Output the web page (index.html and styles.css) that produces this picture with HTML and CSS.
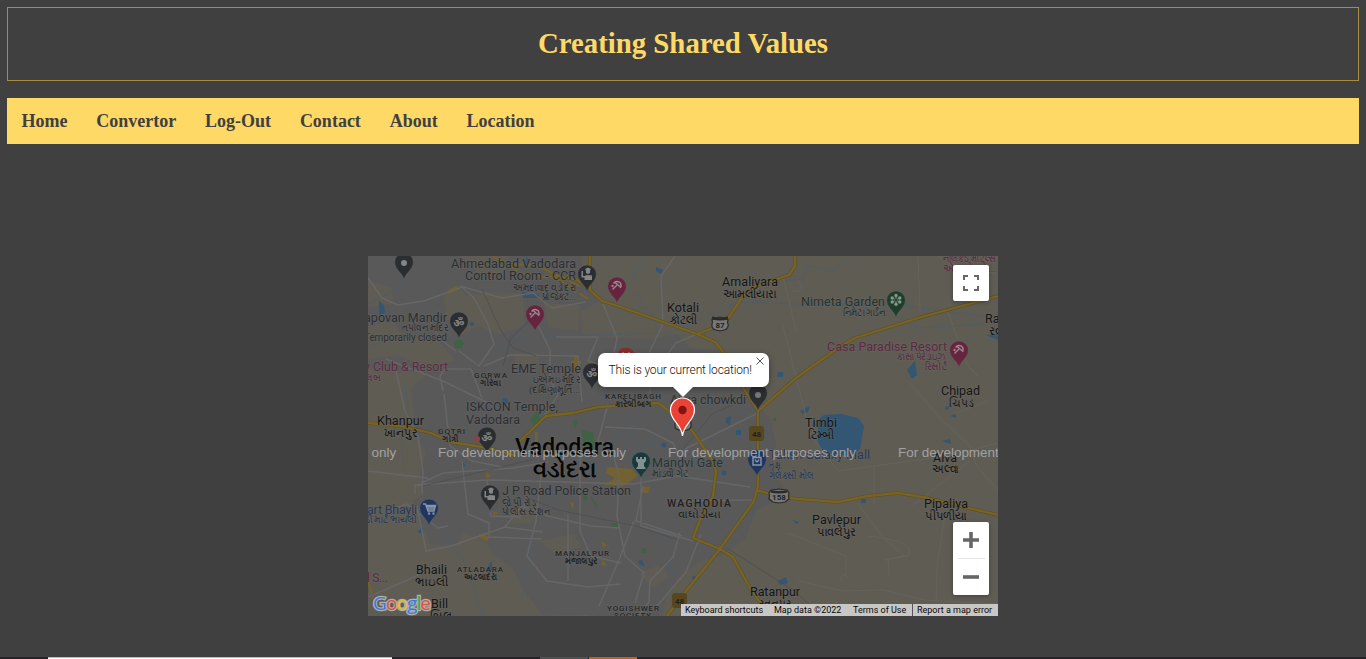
FILE: index.html
```html
<!DOCTYPE html>
<html lang="en">
<head>
<meta charset="utf-8">
<title>Creating Shared Values</title>
<link rel="stylesheet" href="styles.css">
</head>
<body>
<header class="banner"><h1>Creating Shared Values</h1></header>
<nav class="nav"><a>Home</a><a>Convertor</a><a>Log-Out</a><a>Contact</a><a>About</a><a>Location</a></nav>
<main class="map">
<svg class="tiles" width="630" height="360" viewBox="0 0 630 360">
<defs>
<path id="drop" d="M0 0C-1-7-9.300-10-9.300-18A9.300 9 0 0 1 9.300-18C9.300-10 1-7 0 0Z"/>
<g id="umbrella" fill="none" stroke="#9b8a90" stroke-width="1.3"><path d="M-3.500-20.500Q-1-24 3-21.500M3-21.500Q5-19 3.500-16M-2.500-22L4-16.500M0-19L-4.500-14.500"/><circle cx="-4.500" cy="-18" r=".5"/></g>
<path id="shield" d="M-7-7L-4-6 0-7 4-6 7-7 8-4Q7-2 8 0Q9 5 4 6L0 7-4 6Q-9 5-8 0Q-7-2-8-4Z"/>
</defs>
<rect width="630" height="360" fill="#5f5c54"/>
<path class="city" d="M0 0H213L216 28 230 46 213 55 215 78 245 82 285 83 310 78 322 92 350 94 373 123 388 145 403 165 408 190 403 215 415 231 405 247 388 254 378 282 365 292 350 300 330 306 312 320 300 335 293 360H175L155 333 145 312 125 298 118 285 96 276 88 290 62 288 52 263 45 245 56 238 52 220 58 196 47 178 40 159 43 132 60 118 0 112Z"/>
<g class="land"><path d="M75 38L90 28 98 40 125 35 155 38 157 69 132 79 110 70 95 79 78 63ZM0 24L24 32 26 48 0 51ZM92 0H140L137 18 112 20 103 9ZM0 70L25 65 37 82 68 82 88 105 58 112 31 100 0 103ZM0 115L42 119 45 148 48 170 50 220 38 262 0 282ZM145 97H171V106L148 110ZM176 47L212 49 210 75 180 71ZM140 255L170 249 169 267 145 268ZM171 285L205 278 214 291 188 299ZM270 318L290 309 301 320 286 332Z"/></g>
<g class="water"><path d="M159 0L161 8 156 12ZM154 36L171 39 170 42 155 42ZM11 45L16 49 17 57 11 59ZM288 11L295 14 293 18 288 15ZM450 164L456 159 473 158 490 162 496 170 492 193 482 200 455 196 450 186ZM539 114L547 105 549 119 544 123ZM432 155L442 150 440 156 434 158ZM582 160L588 157 588 162ZM574 185L582 183 583 188ZM618 79L630 78V84ZM410 116H415V121H409ZM358 162L363 160 362 170 358 166ZM368 174H373V179H368ZM120 310L124 305 124 315 120 318ZM410 325L418 321 420 327 412 329ZM270 305L274 304 277 310 272 309ZM250 218H260V223H250ZM49 276L55 271 55 278ZM493 243H498V247H493ZM425 264L431 266 428 268ZM345 102H350V106H345Z"/><circle cx="95" cy="209" r="2"/><circle cx="296" cy="189" r="2.5"/><circle cx="356" cy="217" r="2.5"/><circle cx="137" cy="145" r="3"/><circle cx="104" cy="68" r="2"/><circle cx="579" cy="152" r="2"/><circle cx="326" cy="322" r="2"/><circle cx="395" cy="208" r="2"/></g>
<g class="park"><path d="M86 87L91 82 96 87 93 92 87 92ZM162 163L170 155 172 164 165 169ZM214 174L225 177 226 195 216 192ZM204 165L209 163 208 173ZM243 267H252V271H243ZM222 239L230 250 228 253ZM213 233L220 242 216 245ZM274 292H278V297H274ZM404 164L408 161 408 165Z"/></g>
<g class="blocks"><path d="M206 99H209V115H206ZM203 105H213V108H203ZM239 211L264 213 270 220 255 230 236 229 247 222 238 217ZM272 231L282 230 280 237H275ZM111 278L121 280 120 285 112 282ZM124 255L132 257 126 259ZM167 176H170V191H167ZM202 246L206 247 205 254ZM177 149L184 151 180 158ZM118 216L123 220 118 223ZM233 285L239 289 235 292ZM234 303L239 310 234 309ZM192 225L198 226 198 228ZM80 34L89 30 90 34 81 38Z"/></g>
<g class="stream"><path d="M0 48L40 27M0 91L22 83 50 79 80 84M100 111L120 97 157 82 220 79 300 77 345 58 370 46 430 48 530 49 615 60M275 8L263 20 269 24 261 33 274 43 270 50 282 55 290 76M415 25L435 23 440 10 465 15 480 2M475 49L525 56 550 72 615 68M254 165L268 172 258 180 270 187 287 180 304 158M243 180L250 178 257 187M310 159L283 190 271 193 260 201M297 262L291 267 298 277 295 289 304 292 302 315 310 321 301 332 304 344M158 242L167 275 160 287 166 300 157 317 154 341M77 270L82 290 94 302 108 340 115 360M372 255L368 270 358 285 352 293M36 125L40 150 33 182 36 215M191 249L180 240 176 226M384 246L389 254 384 262"/></g>
<g class="minor"><path d="M0 22L14 42 30 49 56 45 94 31 106 42 120 68 126 88 111 110 91 95M92 30L134 42 165 37 184 52 218 46M168 65L182 94 182 124 190 139 176 160M88 95L72 83 63 67M116 110L142 99 210 100 214 146M188 81H230L220 105 240 111 284 113M307 0L293 20 295 68 282 95 282 150M235 48L249 82 246 97M288 113L308 87 329 78M75 135L72 120 77 113 103 113 114 142M28 115L37 155 50 180 55 216 54 237M53 227L75 217 145 212 180 206M47 238V229L120 224 162 225 265 228 310 220 382 231M76 138L82 190 104 205 135 211M94 205L100 258 121 267 121 281 174 283M119 224L123 260 152 261 160 240M49 250L58 295 83 290 137 271 154 250 180 260 223 270 252 272M174 211L168 265 159 300 179 325 220 331 252 328M175 276L137 271M212 180V225L212 275 223 300 253 307M251 222L249 260 257 300 276 317 267 347M266 265L251 304 231 350M273 210L273 270 325 285M305 245L385 244M240 148L230 185 243 190 251 220M312 276L305 301 282 325 281 346 270 360M333 278L318 316 289 350M237 171L277 173 305 187 320 220M317 193L390 157M0 215L60 222M18 103L75 125 120 147M200 258V325M275 230L268 265 314 280M0 341L35 326 65 312M20 255L39 248 70 272 80 270"/></g>
<g class="rail"><path d="M114 33L132 73 145 92 168 100M160 242L190 254 268 270 310 284M360 293L425 334 455 360M315 193L345 157 365 149M135 110L143 82 166 60M55 230L100 219 167 203"/></g>
<g class="trace"><path d="M415 70L443 180 470 215 506 210 506 249M506 210L580 200 630 187M415 20L428 75M430 25Q440 37 425 35M552 55L550 0M580 56L600 110 610 120M540 125L572 162 602 190 608 209 630 234M602 205L545 249M577 259L569 310 568 348M430 325L475 335 515 334 555 344 630 348M490 248L514 280 536 300 520 303 521 320M420 277L478 300 478 320M500 280Q550 285 540 300L517 304M472 325L475 318 480 322M586 158L619 145M570 0L590 10 630 18"/></g>
<g class="casing"><path id="roads" d="M222 0V34L234 45 250 50 329 78 347 86 356 97 376 133 390 155 390 230 386 245 352 293 310 345 299 360M0 167L32 170 63 177 83 186 120 192 148 200M150 187L178 160 205 157 230 151 248 150 290 147 305 158 322 172 343 202 348 215 345 240 333 262 325 282 352 293 365 301 382 332 397 354M329 78L345 72 357 67 375 40 388 30 421 19 427 10 427 0M390 155L428 122 470 92 487 82 550 62 630 40M388 234L410 240 430 243 470 246 500 240 530 237 560 242 600 252 630 259M218 30L208 23 182 20"/></g>
<use class="main-road" href="#roads"/>
<path class="dash" d="M125 0L155 18 190 23 220 43M142 8L168 9 211 30M0 325L8 350"/>

<g class="pin gray"><use href="#drop" x="36" y="24"/><use href="#drop" x="219" y="36"/><use href="#drop" x="91" y="83"/><use href="#drop" x="224" y="134"/><use href="#drop" x="119" y="198"/><use href="#drop" x="122" y="256"/><use href="#drop" x="390" y="155"/></g>
<g class="pin rose"><use href="#drop" x="249" y="48"/><use href="#drop" x="167" y="76"/><use href="#drop" x="591" y="112"/></g>
<g class="pin blue"><use href="#drop" x="61" y="270"/><use href="#drop" x="389" y="221"/></g>
<use class="pin garden" href="#drop" x="528" y="62"/><use class="pin gate" href="#drop" x="273" y="223"/><use class="pin red" href="#drop" x="258" y="118"/>
<path d="M255 96V102M261 96V102M255 99H261" fill="none" stroke="#a88380" stroke-width="1.5"/>
<circle cx="36" cy="7" r="3" fill="#858585"/><circle cx="390" cy="139" r="3" fill="#777"/>
<use href="#umbrella" x="249" y="48"/><use href="#umbrella" x="167" y="76"/><use href="#umbrella" x="591" y="112"/>
<g class="om"><text x="91" y="71">ॐ</text><text x="224" y="122">ॐ</text><text x="119" y="186">ॐ</text></g>
<g fill="#858585"><path id="officer" d="M217 13L220 11.500 223 13 222 14.500V17L220 18 218 17V14.500ZM216.500 24V20L219 19 224 19.500V24ZM213.500 15H215V20H217V21.500H213.500Z"/><use href="#officer" x="-97" y="220"/></g>
<g fill="none" stroke="#8995aa" stroke-width="1.4"><path d="M55 248H57.500L60 255H66L67.500 249.500H58.500M59 251H67M59.500 253H66.500"/><circle cx="61" cy="257.500" r=".5"/><circle cx="65.500" cy="257.500" r=".5"/><path d="M385 201.500H393V209H385ZM387 203.500Q389 208 391 203.500"/></g>
<path d="M268 201V205L270 207V210L268 213H278L276 210V207L278 205V201H276V203H274V201H272V203H270V201Z" fill="#809392"/>
<g fill="#829887"><circle cx="528" cy="39.500" r="1.700"/><circle cx="531.800" cy="42" r="1.700"/><circle cx="531.800" cy="46" r="1.700"/><circle cx="528" cy="48.300" r="1.700"/><circle cx="524.200" cy="46" r="1.700"/><circle cx="524.200" cy="42" r="1.700"/></g><path d="M528 40V48M524.500 42L531.500 46M531.500 42L524.500 46" stroke="#829887"/><circle cx="528" cy="44" r="1.300" fill="#203d2b"/>
<circle cx="109" cy="183" r="3" fill="#8b4441"/>

<g class="route"><use href="#shield" x="352" y="68"/><path class="band" d="M344.500 62.500Q352 64 359.500 62.500"/><text x="352" y="72">87</text><use href="#shield" x="315" y="168"/><path d="M403 234L411 233 419 234 421 237Q420 240 421 243L417 246 411 247 405 246 401 243Q402 240 401 237Z"/><path class="band" d="M403 235.500Q411 237 419 235.500"/><text x="411" y="244">158</text></g>
<g class="highway"><rect x="381" y="170" width="15" height="15" rx="3"/><text x="388.500" y="181">48</text><rect x="304" y="337" width="15" height="15" rx="3"/><text x="311.500" y="348">48</text></g>

<g class="poi">
<text x="83" y="12" textLength="125">Ahmedabad Vadodara</text><text x="97" y="24" textLength="111">Control Room - CCR</text>
<text class="gu" x="145" y="35" textLength="63" lengthAdjust="spacingAndGlyphs">અમદાવાદ વડોદરા</text><text class="gu" x="174" y="44" textLength="34" lengthAdjust="spacingAndGlyphs">પ્રોજેક્ટ...</text>
<text x="-4" y="66" textLength="83">apovan Mandir</text><text class="gu" x="34" y="75" textLength="46" lengthAdjust="spacingAndGlyphs">તપોવન મંદિર</text><text class="small" x="-4" y="85" textLength="83">Temporarily closed</text>
<text x="143" y="117" textLength="70">EME Temple</text><text class="gu" x="165" y="127" textLength="47" lengthAdjust="spacingAndGlyphs">ઇએમઇ મંદિર</text><text class="gu" x="161" y="137" textLength="51" lengthAdjust="spacingAndGlyphs">(દક્ષિણામૂર્તિ...</text>
<text x="98" y="155" textLength="92">ISKCON Temple,</text><text x="98" y="167.500" textLength="54">Vadodara</text>
<text x="302" y="148" textLength="76">Ajwa chowkdi</text>
<text x="134" y="239" textLength="129">J P Road Police Station</text><text class="gu" x="134" y="250" textLength="34" lengthAdjust="spacingAndGlyphs">જે.પી રોડ</text><text class="gu" x="134" y="259" textLength="48" lengthAdjust="spacingAndGlyphs">પોલીસ સ્ટેશન</text>
</g>
<g class="poi green"><text x="433" y="50" textLength="84">Nimeta Garden</text><text class="gu" x="475" y="60" textLength="42" lengthAdjust="spacingAndGlyphs">નિમેટા ગાર્ડન</text></g>
<g class="poi teal"><text x="284" y="211" textLength="71">Mandvi Gate</text><text class="gu" x="284" y="221" textLength="37" lengthAdjust="spacingAndGlyphs">માંડવી ગેટ</text></g>
<g class="poi plum"><text x="5" y="115" textLength="75">Club &amp; Resort</text><text x="-4" y="115">y</text><text class="gu" x="-3" y="125">લબ</text><text x="459" y="95" textLength="120">Casa Paradise Resort</text><text class="gu" x="529" y="104" textLength="49" lengthAdjust="spacingAndGlyphs">કાસા પેરેડાઇઝ</text><text class="gu" x="557" y="114" textLength="22" lengthAdjust="spacingAndGlyphs">રિસોર્ટ</text><text class="gu" x="575" y="6" textLength="53" lengthAdjust="spacingAndGlyphs">નીલકંઠ મોટેલ્સ</text><text class="gu" x="575" y="16" textLength="53" lengthAdjust="spacingAndGlyphs">એન્ડ રેસ્ટો...</text><text x="-1" y="325.500" textLength="21">l S...</text></g>
<g class="poi navy"><text x="-1" y="258" textLength="50">art Bhayli</text><text class="gu" x="-3" y="267" textLength="52" lengthAdjust="spacingAndGlyphs">ડી માર્ટ ભાયલી</text><text x="401" y="203" textLength="101">Taksh Galaxy Mall</text><text class="gu" x="401" y="213" textLength="11" lengthAdjust="spacingAndGlyphs">તક્ષ</text><text class="gu" x="401" y="223" textLength="45" lengthAdjust="spacingAndGlyphs">ગેલેક્સી મોલ</text></g>
<g class="town">
<text x="354" y="30" textLength="56">Amaliyara</text><text class="gu" x="355" y="42" textLength="54" lengthAdjust="spacingAndGlyphs">આમલીયારા</text>
<text x="299" y="56" textLength="32">Kotali</text><text class="gu" x="302" y="68" textLength="27" lengthAdjust="spacingAndGlyphs">કોટલી</text>
<text x="617" y="67">Ra</text><text class="gu" x="621" y="79">રવ</text>
<text x="573" y="139" textLength="39">Chipad</text><text class="gu" x="581" y="151" textLength="25" lengthAdjust="spacingAndGlyphs">ચિપડ</text>
<text x="9" y="169" textLength="47">Khanpur</text><text class="gu" x="16" y="181" textLength="33" lengthAdjust="spacingAndGlyphs">ખાનપુર</text>
<text x="437" y="171" textLength="32">Timbi</text><text class="gu" x="440" y="183" textLength="26" lengthAdjust="spacingAndGlyphs">ટિમ્બી</text>
<text x="565" y="206" textLength="24">Alva</text><text class="gu" x="564" y="217" textLength="27" lengthAdjust="spacingAndGlyphs">અલ્વા</text>
<text x="556" y="252" textLength="44">Pipaliya</text><text class="gu" x="557" y="264" textLength="42" lengthAdjust="spacingAndGlyphs">પીપળીયા</text>
<text x="444" y="268" textLength="49">Pavlepur</text><text class="gu" x="449" y="280" textLength="39" lengthAdjust="spacingAndGlyphs">પાવલેપુર</text>
<text x="48" y="318" textLength="31">Bhaili</text><text class="gu" x="47" y="330" textLength="33" lengthAdjust="spacingAndGlyphs">ભાઇલી</text>
<text x="63" y="352" textLength="17">Bill</text><text class="gu" x="62" y="364">બિલ</text>
<text x="382" y="340" textLength="50">Ratanpur</text><text class="gu" x="391" y="352" textLength="32" lengthAdjust="spacingAndGlyphs">રતનપુર</text>
</g>
<g class="area">
<text x="106" y="122" textLength="33">GORWA</text><text class="gu" x="112" y="130" textLength="21" lengthAdjust="spacingAndGlyphs">ગોરવા</text>
<text x="237" y="143" textLength="56">KARELIBAGH</text><text class="gu" x="247" y="151" textLength="37" lengthAdjust="spacingAndGlyphs">કારેલીબાગ</text>
<text x="70" y="178" textLength="27">GOTRI</text><text class="gu" x="74" y="186" textLength="17" lengthAdjust="spacingAndGlyphs">ગોત્રી</text>
<text x="187" y="299.500" textLength="54">MANJALPUR</text><text class="gu" x="197" y="308" textLength="33" lengthAdjust="spacingAndGlyphs">મંજાલપુર</text>
<text x="89" y="316" textLength="46">ATLADARA</text><text class="gu" x="96" y="324" textLength="33" lengthAdjust="spacingAndGlyphs">અટલાદરા</text>
<text x="239" y="354.500" textLength="52">YOGISHWER</text><text x="246" y="362" textLength="37">SOCIETY</text><text x="179" y="365">MAKARPURA</text>
</g>
<text class="district" x="299" y="251" textLength="64">WAGHODIA</text><text class="district" x="310" y="262" textLength="43" lengthAdjust="spacingAndGlyphs">વાઘોડીયા</text>
<text class="metropolis" x="147" y="199" textLength="99" lengthAdjust="spacingAndGlyphs">Vadodara</text><text class="metropolis gujarati" x="165" y="221" textLength="64" lengthAdjust="spacingAndGlyphs">વડોદરા</text>
<g class="watermark"><text x="3.500" y="201">only</text><text x="70" y="201" textLength="188">For development purposes only</text><text x="300" y="201" textLength="188">For development purposes only</text><text x="530" y="201" textLength="188">For development purposes only</text></g>
<g class="logo"><text x="5" y="354" textLength="58"><tspan fill="#3979e2">G</tspan><tspan fill="#dc5044">o</tspan><tspan fill="#e5b629">o</tspan><tspan fill="#3979e2">g</tspan><tspan fill="#31a354">l</tspan><tspan fill="#dc5044">e</tspan></text></g>
<path d="M314.500 180C313.500 168 302.500 165 302.500 154A12 12 0 0 1 326.500 154C326.500 165 315.500 168 314.500 180Z" fill="#ea4335" stroke="#fff" stroke-width="1.2"/><circle cx="314.500" cy="154" r="4.200" fill="#811411"/>
</svg>
<div class="bubble">This is your current location!<svg class="close" width="8" height="8" viewBox="0 0 8 8"><path d="M.5.5L7.500 7.500M7.500.5L.5 7.500"/></svg></div>
<div class="control fullscreen"><svg width="18" height="18" viewBox="0 0 18 18"><path d="M2 6V2H6M12 2H16V6M16 12V16H12M6 16H2V12"/></svg></div>
<div class="control zoom"><svg width="18" height="18" viewBox="0 0 18 18"><path class="bold" d="M9 1V17M1 9H17"/></svg><span class="rule"></span><svg width="18" height="18" viewBox="0 0 18 18"><path class="bold" d="M1 9H17"/></svg></div>
<footer class="credits"><span>Keyboard shortcuts</span><span>Map data ©2022</span><span>Terms of Use</span><span>Report a map error</span></footer>
</main>
<div class="taskbar"><i class="search"></i><i class="app"></i><i class="active"></i></div>
</body>
</html>
```
FILE: styles.css
```css
* { box-sizing: border-box; }
body { margin: 0; padding: 7px 7px 0; height: 659px; display: flex; flex-direction: column; overflow: hidden; background: #404040; font-family: "Liberation Serif", serif; }
.banner { height: 74px; flex: none; border: 1px solid #a78d3e; display: flex; align-items: center; justify-content: center; padding-bottom: 1px; }
h1 { margin: 0; font-size: 28.8px; line-height: 33px; color: #ffd966; }
.nav { height: 46px; flex: none; margin-top: 17px; padding: 13px 14.5px 0; display: flex; gap: 28.8px; background: #ffd966; color: #404040; font-size: 18px; font-weight: bold; line-height: 21px; }
.map { position: relative; width: 630px; height: 360px; flex: none; margin: 112px auto 0; overflow: hidden; font-family: Roboto, sans-serif; }
.tiles { display: block; font-family: Roboto, "Noto Sans", sans-serif; }
.city { fill: #595959; }
.land { fill: #5f5c54; }
.water { fill: #335672; }
.park { fill: #3d6343; }
.blocks { fill: #736230; }
.stream, .minor, .rail, .trace, .casing, .main-road, .dash { fill: none; stroke-linejoin: round; }
.stream { stroke: #4b5e6a; stroke-width: .8; }
.minor { stroke: #666; stroke-width: 1.5; }
.rail { stroke: #4e4e4e; stroke-width: .8; }
.trace { stroke: #65635d; stroke-width: 1; }
.casing { stroke: #5c5028; stroke-width: 3.4; }
.main-road { stroke: #786323; stroke-width: 2.3; }
.dash { stroke: #786323; stroke-width: 1.8; stroke-dasharray: 13 3; }
.pin { stroke: #626262; stroke-width: .5; }
.gray { fill: #2b2e31; }
.rose { fill: #66243e; }
.blue { fill: #20365f; }
.garden { fill: #203d2b; }
.gate { fill: #1a393b; }
.red { fill: #852f2b; }
.om text { font-size: 11px; font-weight: bold; fill: #858585; text-anchor: middle; }
.tiles text { white-space: pre; }
.poi text, .town text, .area text, .district, .metropolis { paint-order: stroke; stroke: rgba(108, 108, 108, .35); stroke-width: 1.6px; stroke-linejoin: round; }
.poi { font-size: 12.5px; fill: #2c2e31; }
.poi .gu { font-size: 9.5px; }
.poi .small { font-size: 10px; }
.green { fill: #27332c; }
.teal { fill: #233436; }
.plum { fill: #5d2b41; }
.navy { fill: #26385a; }
.town { font-size: 12.5px; fill: #151515; }
.town .gu { font-size: 12px; }
.area { font-size: 8px; font-weight: 500; fill: #262626; }
.area .gu { font-size: 8.5px; font-weight: bold; }
.district { font-size: 10.5px; font-weight: 500; fill: #202020; }
.metropolis { font-size: 24px; font-weight: 500; fill: #080808; }
.gujarati { font-size: 23px; font-weight: bold; }
.watermark { font: 13.5px "Liberation Sans", sans-serif; fill: #a1a1a1; }
.route { fill: #777; stroke: #2b2b2b; stroke-width: 1.2; }
.route .band { fill: none; stroke-width: 2.4; }
.route text, .highway text { stroke: none; fill: #222; font-size: 8px; font-weight: bold; text-anchor: middle; }
.highway { fill: #57471e; }
.logo { font: 500 19px "Open Sans", sans-serif; }
.logo text { paint-order: stroke; stroke: #b0b0ad; stroke-width: 2.5px; }
.logo tspan { stroke: inherit; }
.bubble { position: absolute; left: 230px; top: 97px; width: 171px; height: 34px; border-radius: 7px; background: #fff; color: #111; font-size: 12px; font-weight: 300; letter-spacing: -.16px; line-height: 34px; padding-left: 10.5px; white-space: nowrap; box-shadow: 0 2px 6px rgba(0, 0, 0, .35); }
.bubble::after { content: ""; position: absolute; left: 75px; top: 34px; border: 10px solid transparent; border-top-color: #fff; border-bottom: 0; }
.close { position: absolute; right: 5px; top: 4px; fill: none; stroke: #555; }
.control { position: absolute; left: 585px; width: 36px; background: #fff; border-radius: 2px; box-shadow: 0 1px 4px rgba(0, 0, 0, .3); display: flex; align-items: center; }
.control path { fill: none; stroke: #666; stroke-width: 2; }
.control .bold { stroke-width: 3.6; }
.fullscreen { top: 9px; height: 36px; justify-content: center; }
.zoom { top: 266px; height: 73px; flex-direction: column; justify-content: space-between; padding: 9px 0; }
.rule { width: 27px; height: 1px; background: #e6e6e6; }
.credits { position: absolute; right: 0; bottom: 0; width: 317px; height: 12px; display: flex; background: #c8c7c4; color: #080808; font-size: 9px; line-height: 12px; white-space: nowrap; }
.credits span { padding-left: 4px; }
.credits span:nth-child(1) { width: 89px; }
.credits span:nth-child(2) { width: 79px; }
.credits span:nth-child(3) { width: 63px; }
.credits span:nth-child(4) { flex: 1; border-left: 1px solid #555; }
.taskbar { display: flex; flex: none; height: 2px; margin: auto -7px 0; background: #252326; }
.search { width: 344px; margin-left: 48px; background: #fff; border-top: 1px solid #bbb; }
.app { width: 48px; margin-left: 148px; background: #505050; }
.active { width: 48px; margin-left: 1px; background: #b1652b; }
```
